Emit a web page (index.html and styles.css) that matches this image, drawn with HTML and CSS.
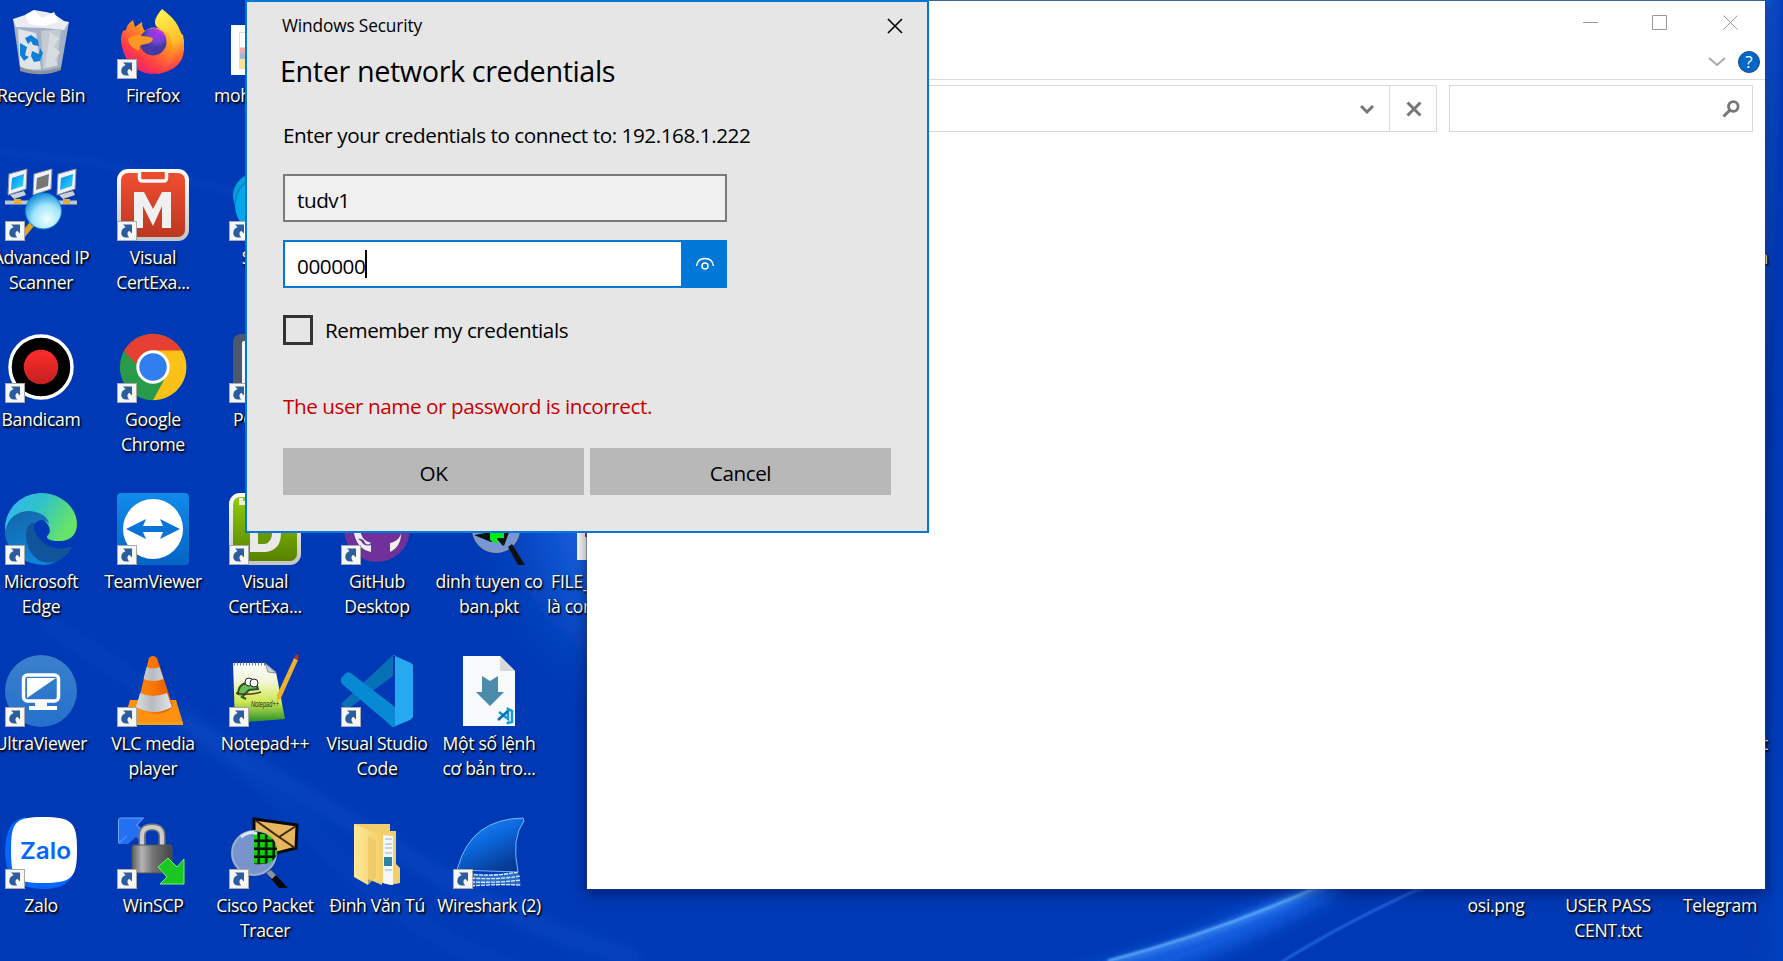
FILE: index.html
```html
<!DOCTYPE html>
<html lang="en">
<head>
<meta charset="utf-8">
<title>Windows Security</title>
<link rel="stylesheet" href="styles.css">
</head>
<body>
<svg width="0" height="0" class="defs">
  <defs>
    <symbol id="shortcut" viewBox="0 0 20 20">
      <rect x=".5" y=".5" width="19" height="19" fill="#f6f6f6" stroke="#a9a9a9"/>
      <path d="M6 3.4h9v9l-2.7-2.6c-2.4 1.500-2.500 3.900-.2 6.600C7.500 17 4.300 15.800 4.300 12c0-3.400 2-5 4.300-6z" fill="#2c5c9c"/>
    </symbol>
    <linearGradient id="red" x2="0" y2="1"><stop stop-color="#f04e30"/><stop offset="1" stop-color="#bb3722"/></linearGradient>
    <linearGradient id="green" x2="0" y2="1"><stop stop-color="#8fcc05"/><stop offset="1" stop-color="#588100"/></linearGradient>
    <linearGradient id="frame" x2="0" y2="1"><stop stop-color="#fff"/><stop offset="1" stop-color="#c4c4c4"/></linearGradient>
    <linearGradient id="tv" x2="0" y2="1"><stop stop-color="#118bea"/><stop offset="1" stop-color="#0564c4"/></linearGradient>
    <linearGradient id="rec" x2="0" y2="1"><stop stop-color="#ff2c2c"/><stop offset="1" stop-color="#c42020"/></linearGradient>
    <linearGradient id="fox" x1="1" x2=".2" y2="1"><stop stop-color="#fff44f"/><stop offset=".4" stop-color="#ff9a1f"/><stop offset=".75" stop-color="#ff3b47"/><stop offset="1" stop-color="#e31587"/></linearGradient>
    <linearGradient id="foxtail" x1=".3" x2=".5" y2="1"><stop stop-color="#fff44f"/><stop offset=".55" stop-color="#ffbd2e"/><stop offset=".8" stop-color="#ff6a2e"/><stop offset="1" stop-color="#f02a5c"/></linearGradient>
    <radialGradient id="globe" cx=".65" cy=".2"><stop stop-color="#a92ee8"/><stop offset=".6" stop-color="#7245d8"/><stop offset="1" stop-color="#453aa5"/></radialGradient>
    <linearGradient id="edgeA" x2="1" y2=".4"><stop stop-color="#36b3f8"/><stop offset=".5" stop-color="#2fc2c9"/><stop offset="1" stop-color="#66e368"/></linearGradient>
    <linearGradient id="edgeB" x2=".4" y2="1"><stop stop-color="#1566a9"/><stop offset="1" stop-color="#0e87dc"/></linearGradient>
    <radialGradient id="lens" cx=".6" cy=".72" r=".7"><stop stop-color="#f0ffff"/><stop offset=".55" stop-color="#a2e6fc"/><stop offset="1" stop-color="#1e95dd"/></radialGradient>
    <linearGradient id="screen" x2="1" y2="1"><stop stop-color="#0a86ea"/><stop offset="1" stop-color="#28ddff"/></linearGradient>
    <linearGradient id="cone" x2="1"><stop stop-color="#f58a10"/><stop offset=".4" stop-color="#ff7800"/><stop offset="1" stop-color="#d95b00"/></linearGradient>
    <linearGradient id="silver" x2="1"><stop stop-color="#d9dde0"/><stop offset=".45" stop-color="#b7bbc0"/><stop offset="1" stop-color="#e3e5e8"/></linearGradient>
    <linearGradient id="lock" x2="1"><stop stop-color="#5d5d5d"/><stop offset=".25" stop-color="#b5b5b5"/><stop offset=".5" stop-color="#777"/><stop offset="1" stop-color="#444"/></linearGradient>
    <linearGradient id="note" x2="0" y2="1"><stop stop-color="#f8fbff"/><stop offset=".3" stop-color="#f3f7d8"/><stop offset=".65" stop-color="#cfe850"/><stop offset="1" stop-color="#1c8a28"/></linearGradient>
    <linearGradient id="fin" x2=".6" y2="1"><stop stop-color="#2a8df5"/><stop offset=".5" stop-color="#0b68dd"/><stop offset="1" stop-color="#063a95"/></linearGradient>
    <linearGradient id="ultra" x2="0" y2="1"><stop stop-color="#3a80cc"/><stop offset="1" stop-color="#2470cc"/></linearGradient>
    <linearGradient id="folder" x2="1"><stop stop-color="#ffe79a"/><stop offset="1" stop-color="#f4cf66"/></linearGradient>
    <linearGradient id="corner" x1=".1" y2="1"><stop stop-color="#3d85ef"/><stop offset=".12" stop-color="#2b73e6"/><stop offset=".3" stop-color="#0c50cd"/><stop offset=".5" stop-color="#0238b3"/><stop offset="1" stop-color="#0040bd"/></linearGradient>
    <filter id="b3" x="-50%" y="-50%" width="200%" height="200%"><feGaussianBlur stdDeviation="3"/></filter>
    <filter id="b9" x="-50%" y="-50%" width="200%" height="200%"><feGaussianBlur stdDeviation="9"/></filter>
    <filter id="b30" x="-80%" y="-80%" width="260%" height="260%"><feGaussianBlur stdDeviation="36"/></filter>
    <filter id="b1" x="-50%" y="-50%" width="200%" height="200%"><feGaussianBlur stdDeviation=".8"/></filter>
    <pattern id="grid" width="7.500" height="8" patternUnits="userSpaceOnUse"><rect width="7.500" height="8" fill="#041404"/><rect x="1" y="1" width="5" height="5.500" fill="#06d400"/></pattern>
  </defs>
</svg>

<main class="desktop">
  <svg class="wallpaper" viewBox="0 0 1783 961">
    <rect width="1783" height="961" fill="#0039b5"/>
    <ellipse cx="640" cy="500" rx="110" ry="150" fill="#1260dc" filter="url(#b30)"/>
    <path d="M0 153Q120 160 245 195" stroke="#0a48c4" stroke-width="8" fill="none" opacity=".4" filter="url(#b3)"/>
    <path d="M40 620Q180 700 330 850T640 980" stroke="#0750c8" stroke-width="20" fill="none" opacity=".3" filter="url(#b9)"/>
    <path d="M180 720Q330 810 430 870T640 960" stroke="#0750cc" stroke-width="18" fill="none" opacity=".5" filter="url(#b9)"/>
    <rect x="1745" width="38" height="961" fill="url(#corner)"/>
    <path d="M1060 990Q1218 950 1335 880" stroke="#1765e8" stroke-width="22" fill="none" filter="url(#b9)"/>
    <path d="M1108 964Q1222 934 1330 882" stroke="#4795fa" stroke-width="5" fill="none" opacity=".85" filter="url(#b3)"/>
    <path d="M1108 961Q1218 932 1320 886" stroke="#6ab8ff" stroke-width="2" fill="none" filter="url(#b1)"/>
    <path d="M1280 963Q1345 922 1430 884" stroke="#2f7bf2" stroke-width="2" fill="none" opacity=".85" filter="url(#b1)"/>
  </svg>

  <section class="icons">
    <div class="item"><svg viewBox="0 0 72 72">
      <path d="M8 12L64 15L56 61Q38 71 15 61z" fill="#b5bec8" opacity=".9"/><path d="M8 12l12-4 9-5 12 2 8 2 10 7 5 1-5 8-20-2-28-1z" fill="#e9edf0"/><path d="M20 8l9-5 8 8 12-6 5 10-16 4-14-2z" fill="#fff"/><path d="M13 22l18 4 5 36q-14 2-21-3z" fill="#e0e4e7"/><path d="M36 24l20-2-4 37-14 3z" fill="#c3cad1"/><path d="M45 25l9 6-5 9 6 5-5 8 3 5-13 3z" fill="#d7dce0"/><path d="M15 60q20 8 41 0v3q-18 8-41 1z" fill="#8b9298"/>
      <path d="M20 31l6-3 7 5 1 6-6-1-2-4-3 3zM15 36l7 4-2 8 4 2-5 4-4-6zM26 49l1-5 7 3 1-6 3 5-3 8-6 1z" fill="#0b80d6"/></svg><p>Recycle Bin</p></div>
    <div class="item"><svg viewBox="0 0 72 72">
      <path d="M16 13q1 4 2 7l7-5q0 6 3 9Q35 18 44 22 60 22 66 28 70 46 58 58 48 67 35 67 19 66 9 51 1 34 6 24l3-1q1-6 7-10z" fill="url(#fox)"/><path d="M45 2q12 9 16 17 9 17 5 30Q61 64 40 67q20-13 17-27l-5-13-9-5q-11-5 2-20z" fill="url(#foxtail)"/><circle cx="36" cy="35" r="13.500" fill="url(#globe)"/><path d="M11 32q8-6 14-3 11 1 11 3-1 4-7 5-8 0-7 7-10-4-11-12z" fill="#ff9823"/><path d="M36 20l10 5 3 5-12-6z" fill="#b833e1"/></svg><svg class="arrow"><use href="#shortcut"/></svg><p>Firefox</p></div>
    <div class="item"><svg viewBox="0 0 72 72"><path d="M2 18h60v50H2z" fill="#fff"/><path d="M10 25h44v37H10z" fill="#ddd"/><path d="M11 26h40v14H11z" fill="#fff"/><path d="M11 41h40v5H11z" fill="#f2aaa5"/><path d="M11 46h40v6H11z" fill="#a0bad6"/><path d="M11 52h40v9H11z" fill="#fae38c"/></svg><p class="from-left">moh</p></div>
    <div class="item"></div><div class="item"></div><div class="item"></div>

    <div class="item"><svg viewBox="0 0 72 72">
      <path d="M0 33.500h72" stroke="#bfc6ce" stroke-width="4"/><g fill="#f0f2f4" stroke="#8c959f"><path d="M4 5l18-5-1 20-18 6z"/><path d="M29 5l18-5-1 20-18 6z"/><path d="M53 5l18-5-1 20-18 6z"/></g><path d="M7 9l12-4-1 12-12 4z" fill="url(#screen)"/><path d="M32 9l12-4-1 12-12 4z" fill="#777"/><path d="M56 9l12-4-1 12-12 4z" fill="url(#screen)"/><path d="M5 26l14-4 2 4-12 4zM54 26l14-4 2 4-12 4z" fill="#cdd2d8"/><path d="M9 30h7v5H9zM58 30h7v5h-7z" fill="#e3ae34"/><path d="M15 65l10-12 4 4-9 11z" fill="#dda126"/><circle cx="38.500" cy="42" r="18" fill="url(#lens)" stroke="#1383cf"/></svg><svg class="arrow"><use href="#shortcut"/></svg><p>Advanced IP<br>Scanner</p></div>
    <div class="item"><svg viewBox="0 0 72 72"><rect width="72" height="72" rx="11" fill="url(#frame)"/><rect x="4" y="4" width="64" height="64" rx="7" fill="url(#red)"/><path d="M22.500 3v6q0 3 3 3h21q3 0 3-3V3" fill="#e94d30" stroke="#f5f5f5" stroke-width="3.500"/><path d="M17 59V23h10l9 17 9-17h9v36h-9V37l-9 20-10-20v22z" fill="#f0f0f0"/></svg><svg class="arrow"><use href="#shortcut"/></svg><p>Visual<br>CertExa...</p></div>
    <div class="item"><svg viewBox="0 0 72 72"><circle cx="27" cy="27" r="23" fill="#079ed9"/><circle cx="37" cy="36" r="31" fill="#04a7ec"/><path d="M6 36A31 31 0 0 1 18 12" stroke="#0b82c5" fill="none" stroke-width="1.500"/></svg><svg class="arrow"><use href="#shortcut"/></svg><p>Skype</p></div>
    <div class="item"></div><div class="item"></div><div class="item"></div>

    <div class="item"><svg viewBox="0 0 72 72"><circle cx="36" cy="36" r="31" fill="#000" stroke="#fff" stroke-width="3.500"/><circle cx="36" cy="36" r="17.300" fill="url(#rec)"/></svg><svg class="arrow"><use href="#shortcut"/></svg><p>Bandicam</p></div>
    <div class="item"><svg viewBox="0 0 72 72"><circle cx="36" cy="36" r="33.200" fill="#289a49"/><path d="M7 20A33.200 33.200 0 0 1 65 20L44 28 25 50z" fill="#e63f33"/><path d="M65 19.500A33.200 33.200 0 0 1 36 69.200L52 40 36 19.500z" fill="#fbc116"/><path d="M7 20l18 31 12 1z" fill="#289a49"/><circle cx="36" cy="36" r="16.700" fill="#fff"/><circle cx="36" cy="36" r="13.700" fill="#317fef"/></svg><svg class="arrow"><use href="#shortcut"/></svg><p>Google<br>Chrome</p></div>
    <div class="item"><svg viewBox="0 0 72 72"><rect x="4" y="3" width="64" height="66" rx="8" fill="#4c586c"/><rect x="13" y="10" width="50" height="52" rx="2" fill="#f1f3f5"/></svg><svg class="arrow"><use href="#shortcut"/></svg><p class="pc">PC</p></div>
    <div class="item"></div><div class="item"></div><div class="item"></div>

    <div class="item"><svg viewBox="0 0 72 72"><path d="M0 38A36 36 0 0 1 35 0C58 0 72 16 72 31 72 44 62 49 53 48 44 48 40 45 43 42 48 37 42 27 34 25 20 18 6 22 0 38z" fill="url(#edgeA)"/><path d="M0 38Q5 18 25 18 43 20 44 32 42 27 36 27 28 28 27 39 27 49 37 54 50 60 66 54 56 70 40 72 13 71 3 51q-3-5-3-13z" fill="url(#edgeB)"/><path d="M21 39q-1 20 14 29 16 6 29-9l3-5q-16 5-28-4-10-7-11-21-6 3-7 10z" fill="#10559c"/></svg><svg class="arrow"><use href="#shortcut"/></svg><p>Microsoft<br>Edge</p></div>
    <div class="item"><svg viewBox="0 0 72 72"><rect width="72" height="72" rx="4" fill="url(#tv)"/><circle cx="36" cy="36" r="30" fill="#fff"/><path d="M9 36l20-10-3 7h20l-3-7 20 10-20 10 3-7H26l3 7z" fill="#0a74d6"/></svg><svg class="arrow"><use href="#shortcut"/></svg><p>TeamViewer</p></div>
    <div class="item"><svg viewBox="0 0 72 72"><rect width="72" height="72" rx="11" fill="url(#frame)"/><rect x="4" y="4" width="64" height="64" rx="7" fill="url(#green)"/><path d="M22 3v-3h28v10H12V5" stroke="#eee" fill="none" stroke-width="4"/><path d="M25 20h12q15 3 15 20 0 17-15 19H21V20z" fill="#e9e9e9"/><path d="M29 28h7q7 2 7 12 0 9-7 11h-7z" fill="#69970a"/></svg><svg class="arrow"><use href="#shortcut"/></svg><p>Visual<br>CertExa...</p></div>
    <div class="item"><svg viewBox="0 0 72 72"><circle cx="36" cy="36" r="33" fill="#70319b"/><path d="M13 40q3 16 17 19v-7q-7 2-10-4l-3-2q5-1 7 4 3 3 6 0-13-3-10-19l2-17 12 5q8-1 15 0l10-4 2 14q2 18-12 21v9q13-6 11-25l-6-18-17-8-18 9z" fill="#eee"/></svg><svg class="arrow"><use href="#shortcut"/></svg><p>GitHub<br>Desktop</p></div>
    <div class="item"><svg viewBox="0 0 72 72"><circle cx="43" cy="36" r="23" fill="#7796d8" stroke="#8999ad" stroke-width="2"/><path d="M21 42l17-3V28h20l-8 25-6-7-6 3z" fill="#071207"/><path d="M37 34h14v12h-7v5l-7-4z" fill="#00ec18"/><path d="M51 53l-7-8h7V34h7z" fill="#101410"/><path d="M55 54l4-3 13 21h-7z" fill="#111"/></svg><p>dinh tuyen co<br>ban.pkt</p></div>
    <div class="item"><svg viewBox="0 0 72 72"><path d="M12 0h48v67H12z" fill="#f8f8f8"/><path d="M20 37h30v7H20z" fill="#c33"/></svg><p class="file">FILE_<br>là con</p></div>

    <div class="item"><svg viewBox="0 0 72 72"><circle cx="36" cy="36" r="36" fill="url(#ultra)"/><rect x="18.500" y="20" width="35" height="26" rx="4" fill="none" stroke="#fff" stroke-width="3.500"/><path d="M22 23h29L22 43z" fill="#fff"/><path d="M30 47h12v4h10v4H24v-4h6z" fill="#fff"/></svg><svg class="arrow"><use href="#shortcut"/></svg><p>UltraViewer</p></div>
    <div class="item"><svg viewBox="0 0 72 72"><path d="M13 45h46l7 23q-28 4-60 0z" fill="#ff9010"/><path d="M7 67h59v3H7z" fill="#f5a11c"/><path d="M32 3q4-4 8 0l16 49q-16 14-36 0z" fill="url(#cone)"/><path d="M29.500 12q6 3 13 0l4 12q-10 4-20 0zM23 38q13 6 27 0l5 14q-18 10-36 0z" fill="url(#silver)"/></svg><svg class="arrow"><use href="#shortcut"/></svg><p>VLC media<br>player</p></div>
    <div class="item"><svg viewBox="0 0 72 72"><path d="M4 8h32l11 9 9 47-50 4z" fill="url(#note)"/><path d="M5 9h32" stroke="#777" stroke-width="3" stroke-dasharray="1 2"/><path d="M36 8l3 9 8 1z" fill="#ccd3dd" stroke="#555" stroke-width=".6"/><path d="M9 40q0-12 11-12 8 0 9 6l-9 1-7 7 4 2" fill="#6cbd56" stroke="#285827" stroke-width="2"/><circle cx="20" cy="27" r="4" fill="#fff" stroke="#222"/><circle cx="25" cy="28" r="4" fill="#fff" stroke="#222"/><path d="M7 38q12 3 25-1" stroke="#59351a" stroke-width="1.500" fill="none"/><text x="22" y="52" textLength="28" lengthAdjust="spacingAndGlyphs" class="tiny">Notepad++</text><path d="M65 3l4 2-17 38-4 3v-6z" fill="#efb12b"/><path d="M65 3l2-4 3 2-1 4z" fill="#a33236"/></svg><svg class="arrow"><use href="#shortcut"/></svg><p>Notepad++</p></div>
    <div class="item"><svg viewBox="0 0 72 72"><path d="M0 49L52 0v21L7 54q-3 1-7-5z" fill="#0870b4"/><path d="M0 23l5-5q3-2 6 1l43 33v20q-4 0-7-4L1 29q-2-3-1-6z" fill="#0789d3"/><path d="M52 0l18 8q2 1 2 3v51l-3 3-17 7h-2l4-1V0z" fill="#27a9f2"/></svg><svg class="arrow"><use href="#shortcut"/></svg><p>Visual Studio<br>Code</p></div>
    <div class="item"><svg viewBox="0 0 72 72"><path d="M10 1h37l15 15v55H10z" fill="#f8f9fa"/><path d="M47 1v15h15z" fill="#d6d8da"/><path d="M29 21l8 5 8-5v16h6L37 51 23 37h6z" fill="#4a8ba9"/><path d="M46 57l9 7V54l4 2v11l-4 1-1-1" fill="none" stroke="#159ae0" stroke-width="2.500"/><path d="M45 65l10-9" stroke="#0870b4" stroke-width="2.500"/></svg><p>Một số lệnh<br>cơ bản tro...</p></div>
    <div class="item"></div>

    <div class="item"><svg viewBox="0 0 72 72"><path d="M21 0Q0 2 0 36 0 72 39 72q23 0 29-15L20 5z" fill="#0567ff"/><path d="M38 0c29 0 34 5 34 33s-5 33-34 33S6 61 6 33 10 0 38 0z" fill="#fff"/><text x="40.500" y="41.500" text-anchor="middle" textLength="51" lengthAdjust="spacingAndGlyphs" class="zalo">Zalo</text></svg><svg class="arrow"><use href="#shortcut"/></svg><p>Zalo</p></div>
    <div class="item"><svg viewBox="0 0 72 72"><path d="M3 1h24l-6 7 8 9v12l-10-9-8 7H1V3z" fill="#256ff1"/><path d="M1.500 25V3q0-2 3-2h22l-7 7 9 9M10 19l-8 7" fill="none" stroke="#68a8ff"/><path d="M25 30V19q0-9 10-9t10 9v11" fill="none" stroke="#777" stroke-width="7"/><path d="M25 30V19q0-9 10-9t10 9v11" fill="none" stroke="#ccc" stroke-width="4"/><rect x="15" y="28" width="40" height="28" rx="2" fill="url(#lock)" stroke="#555"/><path d="M41 50l10-9 9 9 7-8v25H43l7-7z" fill="#19c622" stroke="#71f66b"/></svg><svg class="arrow"><use href="#shortcut"/></svg><p>WinSCP</p></div>
    <div class="item"><svg viewBox="0 0 72 72"><path d="M25 2l43 6-1 23-23 6-19-9z" fill="#e6b75c" stroke="#080808" stroke-width="3"/><path d="M26 3l24 17L67 9M50 20l16 11" fill="none" stroke="#3d280d" stroke-width="2"/><circle cx="25" cy="36" r="22" fill="#7994cc" stroke="#9bb1c8" stroke-width="2"/><path d="M25 14q25 3 23 23-4 12-23 10z" fill="url(#grid)"/><path d="M12 20q10-7 16-3" stroke="#dce8ff" stroke-width="3" fill="none"/><path d="M37 56l5-3 17 18h-9z" fill="#080808"/><path d="M37 56l5-3 5 5-4 4z" fill="#8992a1"/></svg><svg class="arrow"><use href="#shortcut"/></svg><p>Cisco Packet<br>Tracer</p></div>
    <div class="item"><svg viewBox="0 0 72 72"><path d="M13 7h36v7h6v33l4 4v15l-10 2-36-10z" fill="#f3cf6b"/><path d="M42 18l10 1v49l-10-2z" fill="#f5f7f8"/><path d="M44 22h7M44 27h7M44 31h7M44 36h7M44 53h7" stroke="#8fb2cc"/><path d="M43 40h8v9h-8z" fill="#2d83a2"/><path d="M13 7l28 12v49l-14-6v6L13 60z" fill="url(#folder)"/><path d="M27 19l8 4v37l-8 8z" fill="#e9c963" opacity=".7"/></svg><p>Đinh Văn Tú</p></div>
    <div class="item"><svg viewBox="0 0 72 72"><path d="M5 50Q18 2 70 1l1 3q-13 17-6 51l-61-2z" fill="url(#fin)" stroke="#78b8fa" stroke-width="1"/><path d="M16 56q24 3 49-2l3 15q-25-2-49-1z" fill="#2c6fc6"/><path d="M16 57q25 3 49-2M18 61q27 2 49-2M18 65q26 1 50-2M18 69q26-2 50-1" fill="none" stroke="#e1ecff" stroke-width="1.300" stroke-dasharray="4 1"/></svg><svg class="arrow"><use href="#shortcut"/></svg><p>Wireshark (2)</p></div>
    <div class="item"></div>
  </section>

  <section class="icons right">
    <div class="item"></div><div class="item"></div><div class="item"></div>
    <div class="item"></div><div class="item"></div><div class="item edge"><p>n</p></div>
    <div class="item"></div><div class="item"></div><div class="item"></div>
    <div class="item"></div><div class="item"></div><div class="item"></div>
    <div class="item"></div><div class="item"></div><div class="item edge"><p>t</p></div>
    <div class="item"><p>osi.png</p></div><div class="item"><p>USER PASS<br>CENT.txt</p></div><div class="item"><p>Telegram</p></div>
  </section>

  <section class="explorer">
    <div class="caption">
      <svg viewBox="0 0 16 16"><path d="M0 7.500h15" /></svg>
      <svg viewBox="0 0 16 16"><path d="M.5 .5h14v14H.5z"/></svg>
      <svg viewBox="0 0 16 16"><path d="M.5 .5l14 14M14.500 .5l-14 14"/></svg>
    </div>
    <div class="ribbon">
      <svg class="chev" viewBox="0 0 18 12"><path d="M1 2l8 7 8-7" fill="none" stroke="#aaa" stroke-width="2"/></svg>
      <span class="help">?</span>
    </div>
    <div class="toolbar">
      <div class="address"><svg viewBox="0 0 14 14"><path d="M1 4l6 6 6-6" fill="none" stroke="#777" stroke-width="3"/></svg></div>
      <div class="stop"><svg viewBox="0 0 16 16"><path d="M1.500 1.500l13 13m0-13l-13 13" stroke="#777" stroke-width="3"/></svg></div>
      <div class="search"><svg viewBox="0 0 18 18"><circle cx="11.300" cy="6.500" r="4.800" fill="none" stroke="#777" stroke-width="2.800"/><path d="M8 10l-6.500 6.500" stroke="#777" stroke-width="3"/></svg></div>
    </div>
  </section>

  <section class="dialog">
    <header><span>Windows Security</span><svg viewBox="0 0 16 16"><path d="M1 1l14 14M15 1L1 15" stroke="#000" stroke-width="1.600"/></svg></header>
    <h1>Enter network credentials</h1>
    <p class="prompt">Enter your credentials to connect to: 192.168.1.222</p>
    <div class="field user"><span>tudv1</span></div>
    <div class="field pass"><span>000000</span><i class="caret"></i><b class="reveal"><svg viewBox="0 0 20 14"><path d="M1.500 9Q2.500 1.500 10 1.500T18.500 9" fill="none" stroke="#fff" stroke-width="1.400"/><circle cx="10" cy="9" r="3" fill="none" stroke="#fff" stroke-width="1.500"/></svg></b></div>
    <div class="remember"><i class="box"></i><span>Remember my credentials</span></div>
    <p class="error">The user name or password is incorrect.</p>
    <div class="buttons"><button><span>OK</span></button><button><span>Cancel</span></button></div>
  </section>
</main>
</body>
</html>
```
FILE: styles.css
```css
* { box-sizing: border-box; }
body { margin: 0; font-family: "Open Sans", "Noto Sans", sans-serif; overflow: hidden; }
.defs { position: absolute; }
.desktop { position: relative; width: 1783px; height: 961px; overflow: hidden; background: #0039b5; }
.wallpaper { position: absolute; inset: 0; width: 1783px; height: 961px; }

.icons { position: absolute; left: -15px; top: 7px; display: grid; grid-template-columns: repeat(6, 112px); grid-auto-rows: 162px; }
.icons.right { left: 1440px; grid-template-columns: repeat(3, 112px); }
.item { position: relative; padding: 76px 0 0; }
.item > svg:first-child { position: absolute; left: 20px; top: 0; width: 72px; height: 72px; overflow: visible; }
.item > .arrow { position: absolute; left: 20px; top: 52px; width: 20px; height: 20px; }
.item p { margin: 0; text-align: center; white-space: nowrap; color: #fff; font-size: 17.600px; line-height: 25px; letter-spacing: -.34px; text-shadow: 1px 1px 2px #000, 1px 2px 2px rgba(0,0,0,.8); }
.item p.from-left { text-align: left; padding-left: 5px; }
.item p.pc { text-align: left; padding-left: 24px; }
.item p.file { text-align: left; padding-left: 2px; text-indent: 4px; }
.item p.file::first-line { letter-spacing: -.2px; }
.item.edge p { text-align: right; padding-right: 8px; }
.tiny { font: italic 9px "Liberation Sans", sans-serif; fill: #223; }
.zalo { font: 600 23px Inter, sans-serif; fill: #0567ff; }

.explorer { position: absolute; left: 587px; top: 0; width: 1178px; height: 889px; background: #fff; border-top: 1px solid #3b62a2; box-shadow: 0 0 0 1px rgba(40,65,110,.45), 0 3px 12px 2px rgba(0,0,30,.4); }
.caption { height: 45px; display: flex; justify-content: flex-end; gap: 54px; padding: 14px 26px 0 0; }
.caption svg { width: 16px; height: 16px; fill: none; stroke: #999; }
.caption svg:nth-child(2) { margin-right: 1px; }
.caption svg:first-child { margin-right: -1px; }
.ribbon { height: 34px; display: flex; justify-content: flex-end; gap: 12px; align-items: center; padding: 0 5px 2px 0; border-bottom: 1px solid #ddd; }
.chev { width: 18px; height: 12px; }
.help { width: 22px; height: 22px; border-radius: 50%; background: #0067c8; border: 1px solid #124f86; color: #fff; font-size: 17px; line-height: 20px; text-align: center; }
.toolbar { display: flex; height: 47px; margin: 5px 12px 0 0; }
.address, .stop, .search { border: 1px solid #d9d9d9; display: flex; align-items: center; justify-content: flex-end; }
.address { width: 803px; padding-right: 16px; border-right: 0; }
.address svg { width: 14px; height: 14px; }
.stop { width: 48px; margin-left: -1px; padding-left: 2px; justify-content: center; }
.stop svg { width: 16px; height: 16px; }
.search { width: 304px; margin-left: 12px; padding-right: 12px; }
.search svg { width: 18px; height: 18px; }

.dialog { position: absolute; left: 245px; top: 0; width: 684px; height: 533px; padding: 0 36px; border: 2px solid #0078d7; background: #e6e6e6; color: #000; font-size: 20.700px; letter-spacing: -.45px; }
.dialog span { white-space: nowrap; }
.dialog header { display: flex; justify-content: space-between; align-items: flex-start; height: 47px; margin: 0 -12px 0 -1px; padding-top: 12px; font-size: 17.300px; letter-spacing: -.15px; line-height: 24px; }
.dialog header svg { width: 16px; height: 16px; margin-top: 4px; }
.dialog h1 { margin: 0 0 0 -3px; font-weight: 400; font-size: 28.800px; line-height: 44px; height: 68px; white-space: nowrap; letter-spacing: -.4px; }
.prompt { margin: 0; height: 57px; line-height: 36px; white-space: nowrap; }
.field { display: flex; align-items: center; width: 444px; height: 48px; border: 2px solid #7a7a7a; background: #f0f0f0; padding: 3px 0 0 12px; }
.field.pass { margin-top: 18px; border-color: #0078d7; background: #fff; padding-top: 0; }
.field.pass span { padding-top: 3px; }
.caret { width: 2px; height: 28px; background: #000; }
.reveal { margin-left: auto; width: 44px; height: 44px; background: #0078d7; display: grid; place-items: center; padding-left: 3px; }
.reveal svg { width: 20px; height: 14px; }
.remember { margin-top: 27px; display: flex; height: 30px; align-items: center; gap: 12px; }
.box { width: 30px; height: 30px; border: 3px solid #333; }
.error { margin: 43px 0 0; height: 60px; line-height: 36px; color: #c80000; white-space: nowrap; }
.buttons { display: flex; gap: 6px; }
.buttons button { width: 301px; height: 47px; padding: 2px 0 0; border: 0; background: #b8b8b8; color: #000; font: inherit; letter-spacing: inherit; }
```
